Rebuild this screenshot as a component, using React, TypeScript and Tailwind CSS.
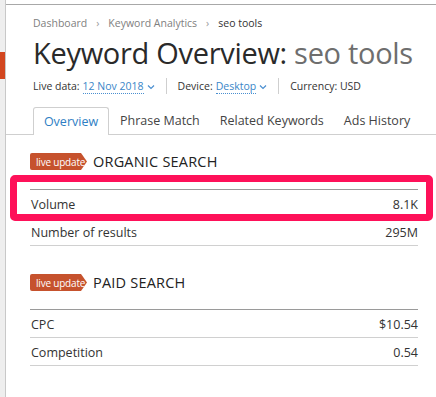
import React from "react";

const Chevron = () => (
  <svg width="8" height="6" viewBox="0 0 8 6" className="ml-[3px] mt-[2px]">
    <polyline points="1,1.5 4,4.5 7,1.5" fill="none" stroke="#4a8fd0" strokeWidth="1.2" />
  </svg>
);

const Badge = () => (
  <div className="flex h-[17px] w-[57px] shrink-0 items-center whitespace-nowrap rounded-l-[2px] bg-[#c6522d] pl-[6px] text-[10px] leading-none tracking-[-0.2px] text-white [clip-path:polygon(0_0,51px_0,57px_50%,51px_100%,0_100%)]">
    live update
  </div>
);

const Row = ({ label, value }: { label: string; value: string }) => (
  <div className="flex h-[28px] items-center justify-between border-b border-[#d0d0d0] pl-[1px] pt-[3px] text-[12.5px] text-[#333]">
    <span>{label}</span>
    <span>{value}</span>
  </div>
);

export default function App() {
  return (
    <div
      className="relative flex h-[397px] w-[436px] overflow-hidden bg-white"
      style={{ fontFamily: '"Open Sans", "Noto Sans", sans-serif' }}
    >
      <div className="w-[6px] shrink-0 border-r border-[#c8c8c8] bg-[#eeeeee]">
        <div className="mt-[52px] h-[27px] w-[5px] bg-[#d2461f]" />
      </div>
      <div className="flex-1">
        <div className="mt-[4px] border-t border-[#a8a8a8]" />
        <div className="pl-[27px] pr-[18px]">
          <div className="mt-[10px] flex h-[16px] items-center whitespace-nowrap text-[10.5px] leading-[16px] text-[#808080]">
            <span>Dashboard</span>
            <span className="mx-[9px] text-[#999]">›</span>
            <span>Keyword Analytics</span>
            <span className="mx-[9px] text-[#999]">›</span>
            <span className="text-[#333]">seo tools</span>
          </div>
          <div className="mt-[4px] h-[36px] whitespace-nowrap text-[29px] leading-[36px] tracking-[-0.3px] text-[#2a2a2a]">
            Keyword Overview: <span className="text-[#6e6e6e]">seo tools</span>
          </div>
          <div className="mt-[7px] flex h-[16px] items-center whitespace-nowrap text-[10.5px] leading-[16px] text-[#333]">
            <span>Live data:</span>
            <span className="ml-[3px] border-b border-dotted border-[#4a8fd0] leading-[14px] text-[#3a86c8]">12 Nov 2018</span>
            <Chevron />
            <div className="mx-[11px] h-[16px] w-px bg-[#cfcfcf]" />
            <span>Device:</span>
            <span className="ml-[3px] border-b border-dotted border-[#4a8fd0] leading-[14px] text-[#3a86c8]">Desktop</span>
            <Chevron />
            <div className="mx-[11px] h-[16px] w-px bg-[#cfcfcf]" />
            <span>Currency: USD</span>
          </div>
        </div>
        <div className="mt-[13px] flex h-[28px] items-end border-b border-[#cfcfcf] pl-[27px]">
          <div className="-mb-px flex h-[28px] w-[76px] items-center justify-center rounded-t-[3px] border border-b-0 border-[#cfcfcf] bg-white pt-[2px] text-[12.5px] text-[#2e7ec4]">
            Overview
          </div>
          <div className="flex h-[27px] items-center gap-[20px] whitespace-nowrap pl-[11px] pt-[2px] text-[12.5px] text-[#444]">
            <span>Phrase Match</span>
            <span>Related Keywords</span>
            <span>Ads History</span>
          </div>
        </div>
        <div className="pl-[24px] pr-[18px]">
          <div className="mt-[18px] flex h-[17px] items-center gap-[6px]">
            <Badge />
            <span className="text-[14.5px] tracking-[0.2px] text-[#222]">ORGANIC SEARCH</span>
          </div>
          <div className="mt-[19px] border-t border-[#9a9a9a]">
            <Row label="Volume" value="8.1K" />
            <Row label="Number of results" value="295M" />
          </div>
          <div className="mt-[28px] flex h-[17px] items-center gap-[6px]">
            <Badge />
            <span className="text-[14.5px] tracking-[0.2px] text-[#222]">PAID SEARCH</span>
          </div>
          <div className="mt-[18px] border-t border-[#9a9a9a]">
            <Row label="CPC" value="$10.54" />
            <Row label="Competition" value="0.54" />
          </div>
        </div>
      </div>
      <div className="absolute left-[10px] top-[175px] h-[46px] w-[423px] rounded-[5px] border-[7px] border-[#fe1159]" />
    </div>
  );
}
